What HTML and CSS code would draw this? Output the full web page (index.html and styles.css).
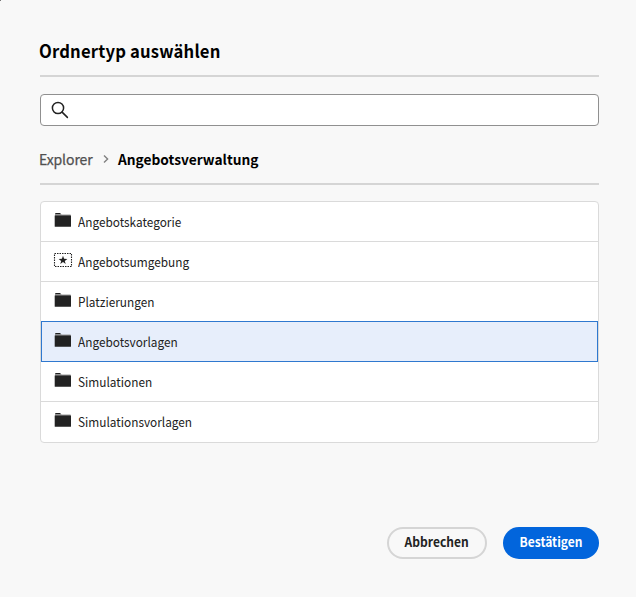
FILE: index.html
```html
<!DOCTYPE html>
<html lang="de">
<head>
<meta charset="utf-8">
<title>Ordnertyp auswählen</title>
<link rel="stylesheet" href="styles.css">
</head>
<body>
<svg class="defs" aria-hidden="true">
  <symbol id="folder" viewBox="0 0 18 16">
    <path d="M1 2.2Q1 1 2 1H6L7.6 2.5H1Z" fill="#222"/>
    <path d="M1 2.5H16.6V4H1Z" fill="#999"/>
    <path d="M.7 3.5H17V14.2Q17 14.8 16.4 14.8H1.3Q.7 14.8 .7 14.2Z" fill="#222"/>
  </symbol>
</svg>
<main class="dialog">
  <h1 class="title"><span>Ordnertyp auswählen</span></h1>
  <div class="search">
    <svg class="search-icon" viewBox="0 0 18 18"><circle cx="7" cy="7" r="5.6"/><path d="M11.1 11.1L16.4 16.4"/></svg>
  </div>
  <nav class="breadcrumb">
    <span class="parent">Explorer</span>
    <svg class="chevron" viewBox="0 0 6 10"><path d="M1 1.5L4.6 5L1 8.5"/></svg>
    <span class="current">Angebotsverwaltung</span>
  </nav>
  <ul class="list">
    <li class="row"><svg class="icon"><use href="#folder"/></svg><span class="label">Angebotskategorie</span></li>
    <li class="row"><svg class="icon env" viewBox="0 0 20 16"><rect x="1.5" y="1.5" width="17" height="13"/><path d="M10 3.7L11.1 6.8L14.4 6.9L11.8 8.9L12.7 12L10 10.1L7.3 12L8.2 8.9L5.6 6.9L8.9 6.8Z"/></svg><span class="label">Angebotsumgebung</span></li>
    <li class="row"><svg class="icon"><use href="#folder"/></svg><span class="label">Platzierungen</span></li>
    <li class="row selected"><svg class="icon"><use href="#folder"/></svg><span class="label">Angebotsvorlagen</span></li>
    <li class="row"><svg class="icon"><use href="#folder"/></svg><span class="label">Simulationen</span></li>
    <li class="row"><svg class="icon"><use href="#folder"/></svg><span class="label">Simulationsvorlagen</span></li>
  </ul>
  <footer class="actions">
    <button class="button cancel"><span>Abbrechen</span></button>
    <button class="button confirm"><span>Bestätigen</span></button>
  </footer>
</main>
</body>
</html>
```
FILE: styles.css
```css
* { box-sizing: border-box; }
body {
  margin: 0;
  height: 597px;
  overflow: hidden;
  background: linear-gradient(#777, #777) 0 0 / 1px 1px no-repeat #f8f8f8;
  color: #222;
  font-family: "Noto Sans CJK SC", "Open Sans", sans-serif;
}
.defs { display: none; }
.dialog { padding: 37px 37px 0 40px; }
.title {
  margin: 0 0 17px;
  height: 40px;
  border-bottom: 2px solid #d5d5d5;
  font-size: 18px;
  line-height: 27px;
  letter-spacing: 0.2px;
  color: #000;
}
.title span {
  display: inline-block;
  margin-left: -1px;
  transform: scaleX(.924);
  transform-origin: left;
}
.search {
  height: 32px;
  padding: 6px 10px;
  background: #fff;
  border: 1px solid #909090;
  border-radius: 4px;
}
.search-icon { display: block; width: 18px; height: 18px; fill: none; stroke: #222; stroke-width: 1.5; stroke-linecap: round; }
.breadcrumb {
  display: flex;
  align-items: center;
  height: 59px;
  margin-bottom: 16px;
  padding-top: 8px;
  border-bottom: 2px solid #d5d5d5;
  font-size: 14px;
  line-height: 20px;
}
.parent { width: 64px; margin-left: -1px; color: #505050; letter-spacing: -.1px; -webkit-text-stroke: .25px #505050; }
.chevron { width: 6px; height: 10px; margin-right: 9px; fill: none; stroke: #808080; stroke-width: 1.4; }
.current { font-weight: 700; color: #000; transform: scaleX(.98); transform-origin: left; }
.list {
  margin: 0;
  padding: 0;
  list-style: none;
  background: #fff;
  border: 1px solid #dadada;
  border-radius: 4px;
}
.row {
  display: flex;
  height: 40px;
  padding-left: 13px;
  border-bottom: 1px solid #dadada;
  font-size: 13px;
  line-height: 40px;
}
.row:last-child { border-bottom: 0; }
.label { transform: scaleX(.91); transform-origin: left; }
.row.selected {
  height: 41px;
  margin-top: -1px;
  padding-left: 12px;
  background: #e7eefb;
  border: 1px solid #2f78cf;
}
.icon { flex: none; width: 18px; height: 16px; margin: 10px 6px 0 0; }
.env { width: 20px; margin-left: -1px; margin-right: 5px; fill: #222; }
.env rect { fill: none; stroke: #222; stroke-width: 1.1; stroke-dasharray: 1.5 1; }
.actions { display: flex; justify-content: flex-end; gap: 16px; margin-top: 84px; }
.button {
  height: 32px;
  padding: 0 0 2px;
  border-radius: 16px;
  font: 700 13px/20px "Noto Sans CJK SC", "Open Sans", sans-serif;
}
.button span { display: inline-block; transform: scaleX(.925); }
.cancel { width: 100px; border: 2px solid #d5d5d5; background: transparent; color: #222; }
.confirm { width: 96px; border: 0; background: #0265dc; color: #fff; }
```
